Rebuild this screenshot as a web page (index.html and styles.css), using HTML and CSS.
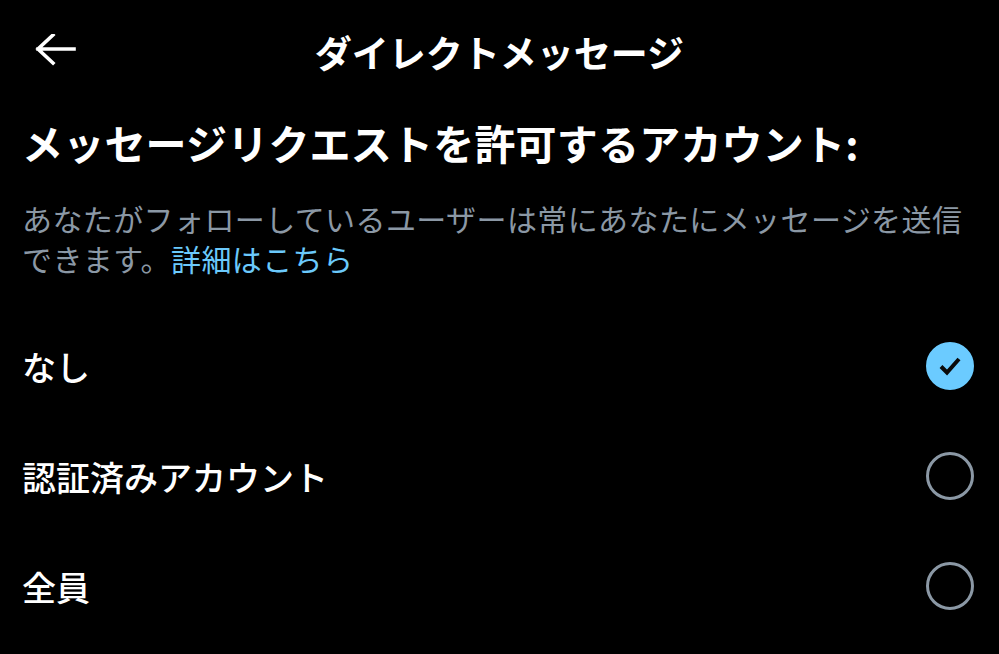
FILE: index.html
```html
<!DOCTYPE html>
<html lang="ja">
<head>
<meta charset="UTF-8">
<title>ダイレクトメッセージ</title>
<link rel="stylesheet" href="styles.css">
</head>
<body>

<!-- ヘッダー -->
<header class="topbar">
  <button class="back" aria-label="戻る">
    <svg viewBox="0 0 44 36" width="44" height="36"><path d="M40 15H4M19 1L4 15l15 14" fill="none" stroke="#fff" stroke-width="3.6" stroke-linecap="square"/></svg>
  </button>
  <h1 class="title">ダイレクトメッセージ</h1>
  <span></span>
</header>

<main class="content">
  <h2 class="heading">メッセージリクエストを許可するアカウント:</h2>
  <p class="desc">あなたがフォローしているユーザーは常にあなたにメッセージを送信<br>できます。<a href="#">詳細はこちら</a></p>

  <ul class="options">
    <li class="opt">
      <span class="opt-label">なし</span>
      <span class="radio checked">
        <svg viewBox="0 0 24 24" width="24" height="24"><path d="M3 12.5l6 6L21 5" fill="none" stroke="#0a0a0a" stroke-width="4"/></svg>
      </span>
    </li>
    <li class="opt">
      <span class="opt-label">認証済みアカウント</span>
      <span class="radio"></span>
    </li>
    <li class="opt">
      <span class="opt-label">全員</span>
      <span class="radio"></span>
    </li>
  </ul>
</main>

</body>
</html>
```

FILE: styles.css
```css
*{margin:0;padding:0;box-sizing:border-box}
html,body{height:100%;background:#000;color:#fff;font-family:"Noto Sans CJK JP","Noto Sans",sans-serif}

/* ---------------- Header ---------------- */
.topbar{height:104px;display:grid;grid-template-columns:1fr auto 1fr;align-items:center;padding:0 34px}
.back{width:44px;height:36px;background:none;border:none;display:flex;cursor:pointer}
.title{font-size:37px;font-weight:700;line-height:1}

/* ---------------- Content ---------------- */
.content{padding:0 25px 0 22px}
.heading{font-size:41px;font-weight:700;line-height:52px;margin-top:12px;letter-spacing:.2px;white-space:nowrap}
.desc{font-size:30px;line-height:40px;color:#8b98a5;margin-top:30px;letter-spacing:.4px;white-space:nowrap}
.desc a{color:#6bc9fb;text-decoration:none}

/* ---------------- Options ---------------- */
.options{list-style:none;margin-top:33px}
.opt{height:110px;display:flex;align-items:center;justify-content:space-between}
.opt-label{font-size:34px;font-weight:500}
.radio{width:48px;height:48px;border-radius:50%;border:3px solid #8b98a5;display:flex;align-items:center;justify-content:center}
.radio.checked{background:#6bcbff;border-color:#6bcbff}
```
